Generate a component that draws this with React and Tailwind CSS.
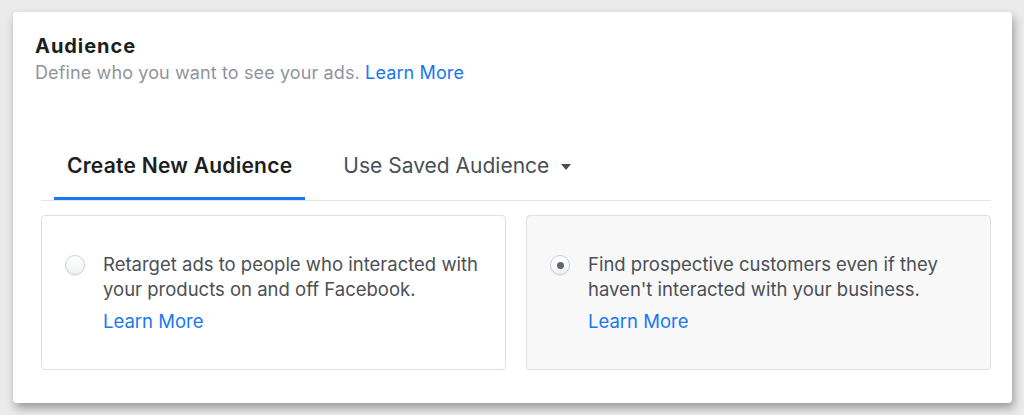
import { useState } from 'react';

const OPTIONS = [
  {
    id: 'retarget',
    lines: ['Retarget ads to people who interacted with', 'your products on and off Facebook.'],
  },
  {
    id: 'prospect',
    lines: ['Find prospective customers even if they', "haven't interacted with your business."],
  },
];

function Radio({ checked }) {
  return (
    <span className="mt-[3px] flex h-[20px] w-[20px] shrink-0 items-center justify-center rounded-full border border-[#ccd0d5] bg-gradient-to-b from-white to-[#f1f2f4] shadow-[0_1px_1px_rgba(0,0,0,0.08)]">
      {checked && <span className="h-[7px] w-[7px] rounded-full bg-[#606770]" />}
    </span>
  );
}

export default function App() {
  const [selected, setSelected] = useState('prospect');

  return (
    <div className="h-[415px] w-[1024px] overflow-hidden bg-[#ebebeb] pl-[13px] pt-[12px] font-['Inter','Liberation_Sans',Arial,sans-serif]">
      <div className="h-[391px] w-[999px] rounded-[4px] bg-white px-[22px] pt-[22px] shadow-[2px_5px_10px_rgba(0,0,0,0.35)]">
        <h2 className="text-[20px] font-bold leading-[24px] tracking-[0.95px] text-[#1c1e21]">Audience</h2>
        <p className="mt-[3px] text-[18px] leading-[24px] tracking-[0.12px] text-[#90949c]">
          Define who you want to see your ads. <a className="text-[#1877f2]">Learn More</a>
        </p>

        <div className="ml-[6px] mr-[-1px] mt-[69px] flex border-b border-[#e5e6e9]">
          <button className="ml-[13px] border-b-[3px] border-[#1877f2] px-[13px] pb-[19px] text-[21px] font-semibold leading-[24px] tracking-[0.25px] text-[#1c1e21]">
            Create New Audience
          </button>
          <button className="ml-[25px] flex items-start gap-[12px] px-[13px] pb-[19px] text-[21px] leading-[24px] text-[#4b4f56]">
            Use Saved Audience
            <svg width="10" height="6" viewBox="0 0 10 6" className="mt-[10px]">
              <path d="M0 0h10L5 6z" fill="#4b4f56" />
            </svg>
          </button>
        </div>

        <div className="ml-[6px] mr-[-1px] mt-[14px] grid grid-cols-2 gap-[20px]">
          {OPTIONS.map((o) => {
            const on = selected === o.id;
            return (
              <div
                key={o.id}
                onClick={() => setSelected(o.id)}
                className={`flex h-[155px] gap-[18px] rounded-[4px] border border-[#dddfe2] pl-[23px] pt-[36px] ${on ? 'bg-[#f8f8f8]' : 'bg-white'}`}
              >
                <Radio checked={on} />
                <div className="text-[18.5px] leading-[25px] text-[#4b4f56]">
                  <p>{o.lines[0]}</p>
                  <p>{o.lines[1]}</p>
                  <a className="mt-[7px] block text-[#1877f2]">Learn More</a>
                </div>
              </div>
            );
          })}
        </div>
      </div>
    </div>
  );
}
